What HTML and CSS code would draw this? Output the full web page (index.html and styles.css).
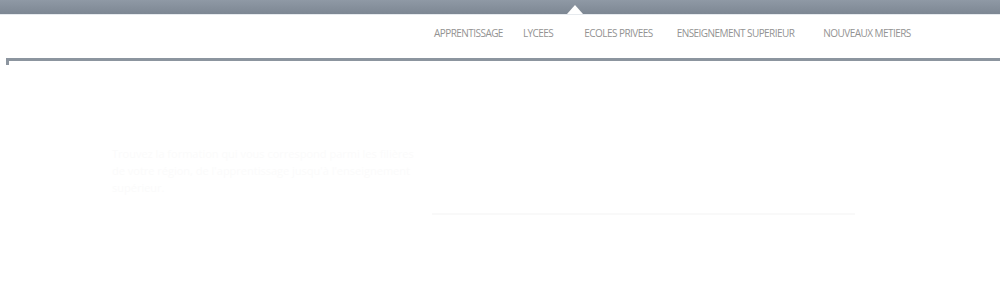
FILE: index.html
```html
<!DOCTYPE html>
<html lang="fr">
<head>
    <meta charset="UTF-8">
    <meta name="viewport" content="width=device-width, initial-scale=1.0">
    <title>Orientation</title>
    <link rel="stylesheet" href="styles.css">
</head>
<body>
    <div class="topbar"><span class="notch"></span></div>
    <nav class="menu">
        <ul>
            <li class="m-app">APPRENTISSAGE</li>
            <li class="m-lyc">LYCEES</li>
            <li class="m-eco">ECOLES PRIVEES</li>
            <li class="m-ens">ENSEIGNEMENT SUPERIEUR</li>
            <li class="m-nou">NOUVEAUX METIERS</li>
        </ul>
    </nav>
    <div class="rule"></div>

    <div class="content">
        <p class="ghost">Trouvez la formation qui vous correspond parmi les filières de votre région, de l'apprentissage jusqu'à l'enseignement supérieur.</p>
        <div class="ghost-line"></div>
    </div>
</body>
</html>
```

FILE: styles.css
```css
body {
    margin: 0;
    font-family: "Open Sans", Arial, sans-serif;
    background: #fff;
    color: #888;
}
.topbar {
    position: relative;
    height: 14px;
    background: linear-gradient(#8f99a5, #7d8793);
    border-bottom: 1px solid #e6eaee;
}
.notch {
    position: absolute;
    left: 567px;
    bottom: 0;
    width: 0;
    height: 0;
    border-left: 8px solid transparent;
    border-right: 8px solid transparent;
    border-bottom: 9px solid #fff;
}
.menu ul {
    list-style: none;
    margin: 0;
    padding: 11px 0 0 434px;
    display: flex;
    height: 32px;
}
.menu li {
    font-size: 10px;
    letter-spacing: -0.55px;
    line-height: 14px;
    color: #939393;
}
.m-lyc { margin-left: 20px; }
.m-eco { margin-left: 31px; }
.m-ens { margin-left: 24px; }
.m-nou { margin-left: 29px; letter-spacing: -0.4px; }
.rule {
    margin-left: 6px;
    height: 3px;
    background: #8c959f;
    position: relative;
}
.rule::after {
    content: "";
    position: absolute;
    left: 0;
    top: 3px;
    width: 3px;
    height: 4px;
    background: #8c959f;
}
.content {
    padding: 84px 0 0 112px;
}
.ghost {
    margin: 0;
    width: 315px;
    font-size: 11px;
    line-height: 17px;
    color: #fbfbfb;
}
.ghost-line {
    margin: 17px 0 0 320px;
    width: 423px;
    height: 2px;
    background: #f9f9f9;
}
```
